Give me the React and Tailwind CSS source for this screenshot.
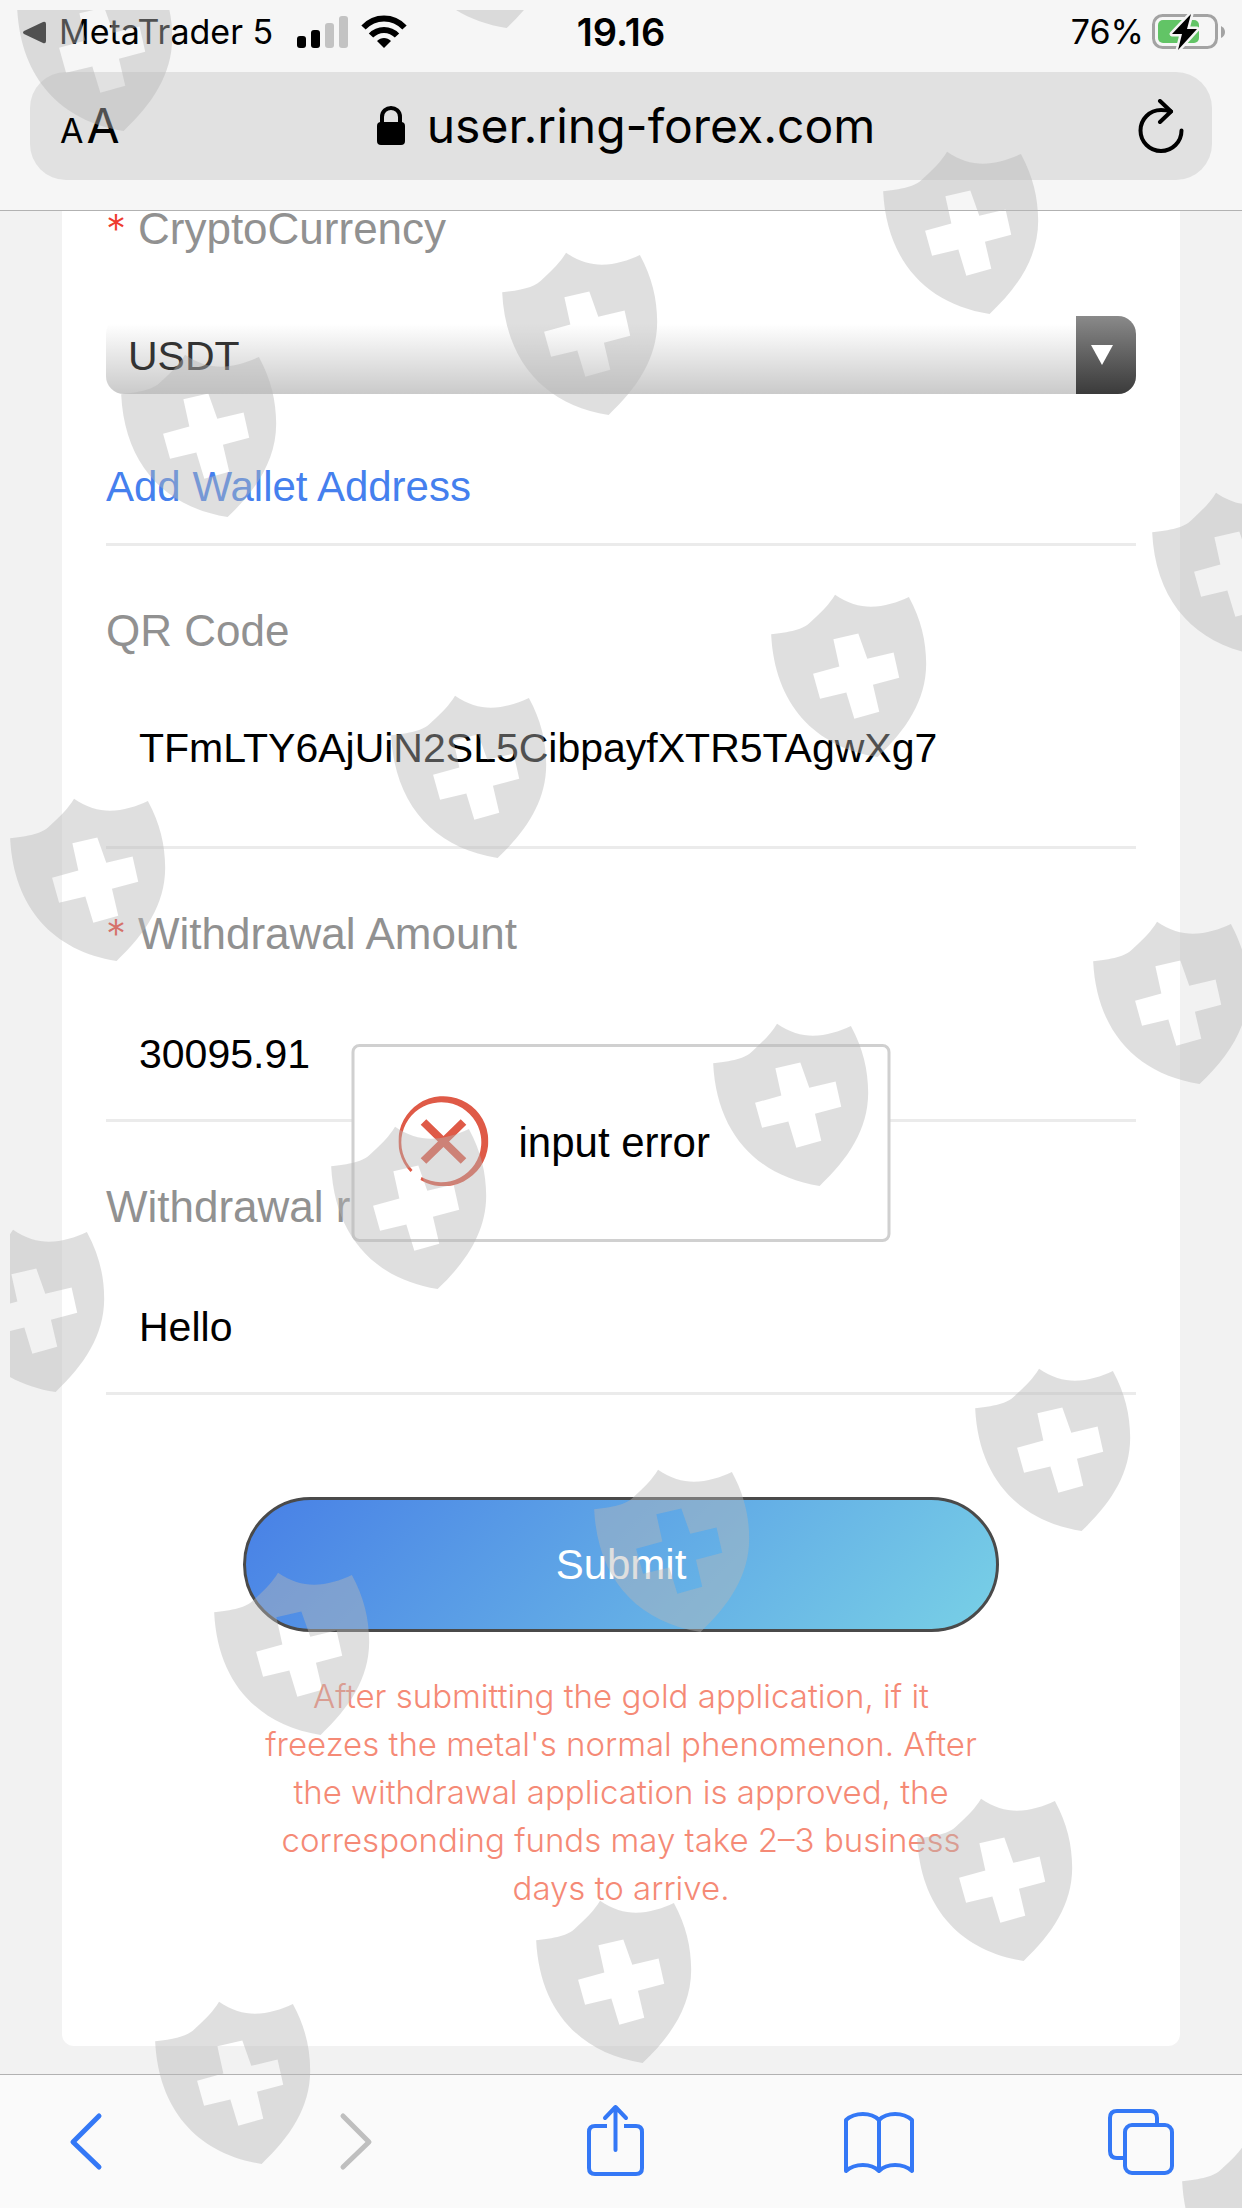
import React, { useState } from 'react';

const shieldPositions = [
  { left: 17, top: -32 },
  { left: 400, top: -135 },
  { left: 883, top: 151 },
  { left: 502, top: 252 },
  { left: 121, top: 354 },
  { left: 1152, top: 492 },
  { left: 771, top: 594 },
  { left: 391, top: 695 },
  { left: 10, top: 798 },
  { left: 1093, top: 921 },
  { left: 713, top: 1023 },
  { left: 331, top: 1126 },
  { left: -51, top: 1229 },
  { left: 975, top: 1368 },
  { left: 594, top: 1469 },
  { left: 214, top: 1572 },
  { left: 917, top: 1798 },
  { left: 536, top: 1900 },
  { left: 155, top: 2001 },
  { left: 1182, top: 2141 },
];

const Watermark = () => (
  <div
    aria-hidden="true"
    className="pointer-events-none absolute inset-0 overflow-hidden [clip-path:inset(10px_0_0_10px)]"
  >
    {shieldPositions.map((pos) => (
      <svg
        key={`${pos.left}-${pos.top}`}
        className="absolute h-[163px] w-[156px]"
        style={{ left: pos.left, top: pos.top }}
        viewBox="0 0 468 490"
        fill="#b7b7b7"
        fillOpacity="0.44"
        fillRule="evenodd"
      >
        <path d="M0 121C70 113 100 105 125 78C155 50 175 30 192 2C230 28 265 38 300 38C340 38 380 25 414 9C450 75 466 140 466 210C466 320 405 410 320 490C130 460 10 330 0 121ZM187 136L205 218L126 240L147 315L226 296L250 375L325 354L306 273L385 252L368 176L289 195L262 119Z" />
      </svg>
    ))}
  </div>
);

const StatusBar = () => (
  <div className="grid h-16 grid-cols-[1fr_auto_1fr] items-center px-4 text-[34px] leading-none">
    <div className="flex items-center gap-3 pl-[7px]">
      <a href="#metatrader" className="mr-3 flex items-center gap-3">
        <svg className="h-[23px] w-6" viewBox="0 0 24 23">
          <path d="M1 10L20 1Q23 0 23 3V20Q23 23 20 22L1 13Q-1 11.500 1 10Z" />
        </svg>
        <span>MetaTrader 5</span>
      </a>
      <svg className="h-8 w-[52px]" viewBox="0 0 52 32" aria-label="Signal">
        <rect x="0" y="20" width="9" height="12" rx="3" />
        <rect x="14" y="14" width="9" height="18" rx="3" />
        <rect x="28" y="7" width="9" height="25" rx="3" fill="#c3c3c3" />
        <rect x="42" y="0" width="9" height="32" rx="3" fill="#c3c3c3" />
      </svg>
      <svg className="h-[34px] w-[46px]" viewBox="0 0 46 34" fill="none" stroke="#000" strokeWidth="6" aria-label="Wi-Fi">
        <path d="M2.500 12.500C14 0.500 32 0.500 43.500 12.500" />
        <path d="M10 20.500C17 13 29 13 36 20.500" />
        <path d="M16 26C20 22 26 22 30 26L23 33Z" fill="#000" stroke="none" />
      </svg>
    </div>
    <span className="text-[38px] font-semibold">19.16</span>
    <div className="flex items-center justify-end gap-2">
      <span>76%</span>
      <svg className="h-[42px] w-[74px]" viewBox="0 0 74 42" aria-label="Battery charging">
        <rect x="1.500" y="4.500" width="63" height="32" rx="9" fill="none" stroke="#a3a3a3" strokeWidth="3" />
        <path d="M69 15Q73 17 73 21Q73 25 69 27Z" fill="#a3a3a3" />
        <rect x="6" y="9" width="41" height="23" rx="5" fill="#62c466" />
        <path
          d="M39 3L20 23H30L26 39L45 18H35Z"
          fill="#000"
          stroke="#f5f5f5"
          strokeWidth="5"
          strokeLinejoin="round"
          paintOrder="stroke"
        />
      </svg>
    </div>
  </div>
);

const AddressBar = () => (
  <div className="mx-[30px] mt-2 grid h-[108px] grid-cols-[1fr_auto_1fr] items-center rounded-[36px] bg-[#e1e1e1] pr-7 pl-[30px]">
    <button type="button" className="flex items-baseline gap-[3px] justify-self-start" aria-label="Text size">
      <span className="text-[34px] leading-none">A</span>
      <span className="text-[48px] leading-none">A</span>
    </button>
    <button type="button" className="flex items-center gap-[22px] pl-2">
      <svg className="h-10 w-7" viewBox="0 0 28 40">
        <rect x="0" y="16" width="28" height="23" rx="4" />
        <path d="M5 18V11C5 -1 23 -1 23 11V18" fill="none" stroke="#000" strokeWidth="4" />
      </svg>
      <span className="text-[48px] leading-[58px]">user.ring-forex.com</span>
    </button>
    <button type="button" className="justify-self-end" aria-label="Reload">
      <svg
        className="h-[54px] w-[46px]"
        viewBox="0 0 46 54"
        fill="none"
        stroke="#000"
        strokeWidth="4"
        strokeLinecap="round"
        strokeLinejoin="round"
      >
        <path d="M33 12.500C29 11.200 26 11 23 11A20.500 20.500 0 1 0 43.500 31.500" />
        <path d="M22 2L33 12.500L22 23" />
      </svg>
    </button>
  </div>
);

const Label = ({ htmlFor, required, children }) => (
  <label htmlFor={htmlFor} className="flex gap-3 text-[44px] leading-9 text-[#919191]">
    {required && <span className="w-5 font-['Inter',sans-serif] text-[40px] font-light text-[#ee3b2f]">*</span>}
    <span className="whitespace-nowrap">{children}</span>
  </label>
);

const inputClass = 'block h-[78px] w-full bg-transparent px-[33px] text-[41px] text-black outline-none';

const ErrorToast = ({ message }) => (
  <div
    role="alert"
    className="absolute top-1/2 left-1/2 flex h-[198px] w-[539px] -translate-x-1/2 -translate-y-1/2 items-center gap-[30px] rounded-lg border-[3px] border-[#d0d0d0] bg-white pl-11"
  >
    <svg className="mb-1 h-[90px] w-[90px]" viewBox="0 0 90 90">
      <path d="M12 76A45 45 0 1 1 22 84L23 81A40 40 0 1 0 14 74Z" fill="#df5a47" />
      <path d="M25 26L65 65M65 26L25 65" stroke="#df5a47" strokeWidth="8" />
    </svg>
    <span className="text-[42px] leading-[48px] text-black">{message}</span>
  </div>
);

const WithdrawalForm = () => {
  const [currency, setCurrency] = useState('USDT');
  const [wallet, setWallet] = useState('TFmLTY6AjUiN2SL5CibpayfXTR5TAgwXg7');
  const [amount, setAmount] = useState('30095.91');
  const [remark, setRemark] = useState('Hello');

  return (
    <form className="flex flex-1 flex-col rounded-b-xl bg-white px-11" onSubmit={(e) => e.preventDefault()}>
      <div className="border-b-[3px] border-[#ebebeb] pb-[38px]">
        <Label htmlFor="currency" required>CryptoCurrency</Label>
        <div className="relative mt-[69px] flex h-[78px] overflow-hidden rounded-[18px]">
          <select
            id="currency"
            value={currency}
            onChange={(e) => setCurrency(e.target.value)}
            className="h-full w-full appearance-none bg-linear-to-b from-white from-10% to-[#cacaca] pt-1 pr-20 pl-[22px] text-[41px] text-[#333333] outline-none"
          >
            <option value="USDT">USDT</option>
          </select>
          <span className="pointer-events-none absolute inset-y-0 right-0 flex w-[60px] items-center justify-center bg-linear-to-b from-[#8a8a8a] to-[#3b3b3b]">
            <svg className="mr-2 h-5 w-[22px]" viewBox="0 0 22 20" fill="#fff">
              <path d="M0 0H22L11 20Z" />
            </svg>
          </span>
        </div>
        <a href="#wallet" className="mt-[75px] block text-[42px] leading-9 text-[#4580ee]">Add Wallet Address</a>
      </div>

      <div className="border-b-[3px] border-[#ebebeb] pt-[67px] pb-[59px]">
        <Label htmlFor="wallet">QR Code</Label>
        <input
          id="wallet"
          type="text"
          className={`mt-[60px] ${inputClass}`}
          value={wallet}
          onChange={(e) => setWallet(e.target.value)}
        />
      </div>

      <div className="border-b-[3px] border-[#ebebeb] pt-[67px] pb-[26px]">
        <Label htmlFor="amount" required>Withdrawal Amount</Label>
        <input
          id="amount"
          type="text"
          inputMode="decimal"
          className={`mt-[63px] ${inputClass}`}
          value={amount}
          onChange={(e) => setAmount(e.target.value)}
        />
      </div>

      <div className="border-b-[3px] border-[#ebebeb] pt-[67px] pb-[26px]">
        <Label htmlFor="remark">Withdrawal r</Label>
        <input
          id="remark"
          type="text"
          className={`mt-[63px] ${inputClass}`}
          value={remark}
          onChange={(e) => setRemark(e.target.value)}
        />
      </div>

      <div className="mx-auto w-full max-w-[756px] pt-[102px] pb-[133px]">
        <button
          type="submit"
          className="h-[135px] w-full rounded-full border-[3px] border-[#4a4a4a] bg-[linear-gradient(135deg,#4880e6,#78d0e6)] text-[42px] text-white"
        >
          Submit
        </button>
        <p className="mt-10 px-4 text-center font-['Inter',sans-serif] text-[33px] leading-[48px] font-light text-[#f58a76]">
          After submitting the gold application, if it freezes the metal's normal phenomenon. After the
          withdrawal application is approved, the corresponding funds may take 2–3 business days to arrive.
        </p>
      </div>
    </form>
  );
};

const Toolbar = () => (
  <nav
    className="flex h-[134px] items-start justify-between border-t border-[#b2b2b2] bg-[#fafafa] pt-[29px] pr-16 pl-[51px]"
    aria-label="Browser"
  >
    <button type="button" aria-label="Back">
      <svg className="h-[76px] w-[72px]" viewBox="0 0 72 76" fill="none" stroke="#3478f6" strokeWidth="5" strokeLinecap="round" strokeLinejoin="round">
        <path d="M48 12L22 38L48 63" />
      </svg>
    </button>
    <button type="button" aria-label="Forward" disabled>
      <svg className="h-[76px] w-[72px]" viewBox="0 0 72 76" fill="none" stroke="#bfbfbf" strokeWidth="5" strokeLinecap="round" strokeLinejoin="round">
        <path d="M28 12L54 38L28 63" />
      </svg>
    </button>
    <button type="button" aria-label="Share">
      <svg className="h-[76px] w-[72px]" viewBox="0 0 72 76" fill="none" stroke="#3478f6" strokeWidth="4" strokeLinejoin="round">
        <path d="M28 22H16Q10 22 10 28V64Q10 70 16 70H57Q63 70 63 64V28Q63 22 57 22H45" />
        <path d="M36.500 46V3M26 14L36.500 3L47 14" strokeLinecap="round" />
      </svg>
    </button>
    <button type="button" aria-label="Bookmarks">
      <svg className="h-[76px] w-[72px]" viewBox="0 0 72 76" fill="none" stroke="#3478f6" strokeWidth="4" strokeLinecap="round" strokeLinejoin="round">
        <path d="M37 16C29 8 13 8 4 16V67C13 59 29 59 37 67C45 59 61 59 70 67V16C61 8 45 8 37 16ZM37 16V67" />
      </svg>
    </button>
    <button type="button" aria-label="Tabs">
      <svg className="h-[76px] w-[72px]" viewBox="0 0 72 76" fill="none" stroke="#3478f6" strokeWidth="4">
        <rect x="19" y="21" width="47" height="48" rx="7" />
        <path d="M19 54H11Q4 54 4 47V14Q4 7 11 7H44Q51 7 51 14V21" />
      </svg>
    </button>
  </nav>
);

const App = () => (
  <div className="relative flex min-h-screen flex-col bg-[#f2f2f2] font-['Liberation_Sans',Arial,sans-serif]">
    <header className="h-[211px] border-b border-[#b2b2b2] bg-[#f6f6f6] font-['Inter',sans-serif] text-black">
      <StatusBar />
      <AddressBar />
    </header>
    <main className="relative flex flex-1 flex-col px-[62px] pb-7">
      <WithdrawalForm />
      <ErrorToast message="input error" />
    </main>
    <Toolbar />
    <Watermark />
  </div>
);

export default App;
